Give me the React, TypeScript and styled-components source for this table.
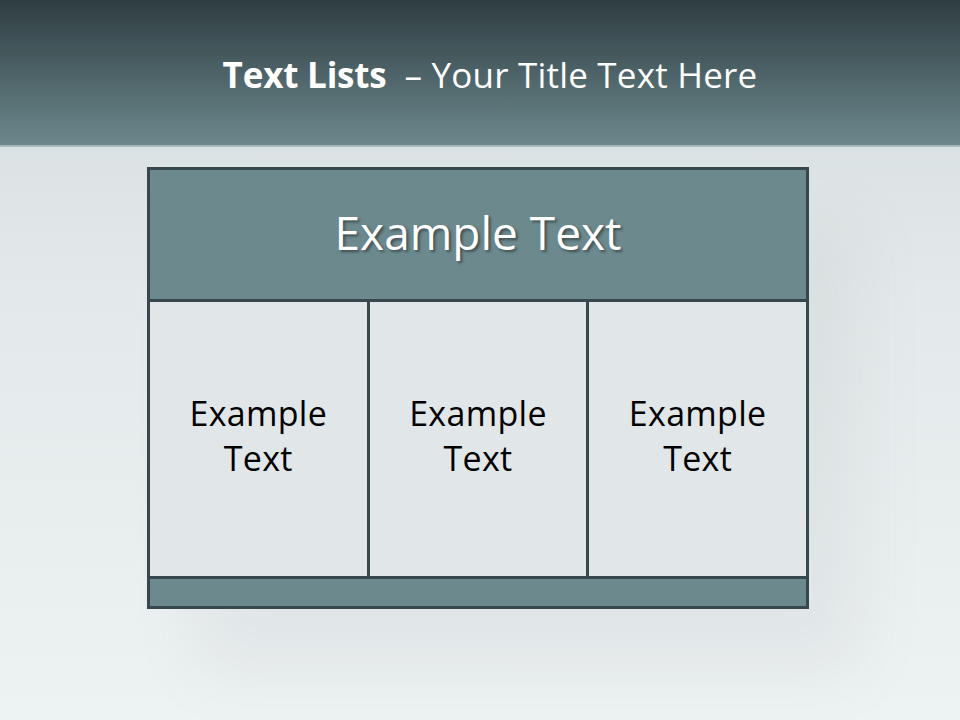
import React, { FC, ReactElement } from 'react';
import styled, { createGlobalStyle } from 'styled-components';

const GlobalStyle = createGlobalStyle`
    html, body {
        margin: 0;
        padding: 0;
    }

    body {
        font-family: 'Open Sans', 'Noto Sans', sans-serif;
        width: 960px;
        height: 720px;
        overflow: hidden;
    }
`;

const Slide = styled.div`
    display: flex;
    flex-direction: column;
    height: 720px;
    width: 960px;
    background: linear-gradient(180deg, #d3dbdc 0%, #e3e9ea 40%, #edf2f3 100%);
`;

const Header = styled.header`
    align-items: center;
    background: linear-gradient(180deg, #2f3d42 0%, #4a5f63 45%, #6c888d 100%);
    border-bottom: 2px solid #a8b9bc;
    box-sizing: border-box;
    display: flex;
    height: 147px;
    justify-content: center;
    padding-top: 4px;
`;

const Title = styled.h1`
    color: #ffffff;
    font-size: 35px;
    font-weight: 400;
    letter-spacing: 0.2px;
    margin: 0 0 0 20px;
`;

const Strong = styled.span`
    font-weight: 700;
    letter-spacing: -0.2px;
    margin-right: 18px;
`;

const Body = styled.main`
    display: flex;
    flex: 1;
    justify-content: center;
    padding-top: 20px;
`;

const Table = styled.div`
    background: #37474b;
    box-shadow: 50px 60px 60px rgba(140, 150, 152, 0.1);
    box-sizing: border-box;
    display: grid;
    flex-shrink: 0;
    gap: 3px;
    grid-template-columns: repeat(3, 1fr);
    grid-template-rows: 129px 274px 27px;
    height: 442px;
    margin-right: 4px;
    padding: 3px;
    width: 662px;
`;

const Banner = styled.div<{ span?: number }>`
    align-items: center;
    background: #6c8a8e;
    color: #ffffff;
    display: flex;
    font-size: 46px;
    grid-column: span ${({ span }) => span ?? 3};
    justify-content: center;
    padding-bottom: 6px;
    text-shadow: 2px 2px 3px rgba(0, 0, 0, 0.45);
`;

const Cell = styled.div`
    align-items: center;
    background: #e1e7e9;
    color: #000000;
    display: flex;
    font-size: 34px;
    justify-content: center;
    letter-spacing: 0.3px;
    line-height: 45px;
    padding-bottom: 6px;
    text-align: center;
`;

const cells = ['Example Text', 'Example Text', 'Example Text'];

const App: FC = (): ReactElement => (
    <>
        <GlobalStyle />
        <Slide>
            <Header>
                <Title>
                    <Strong>Text Lists</Strong>– Your Title Text Here
                </Title>
            </Header>
            <Body>
                <Table>
                    <Banner>Example Text</Banner>
                    {cells.map((text, i) => (
                        <Cell key={i}>
                            {text.split(' ')[0]}
                            <br />
                            {text.split(' ')[1]}
                        </Cell>
                    ))}
                    <Banner />
                </Table>
            </Body>
        </Slide>
    </>
);

export default App;
